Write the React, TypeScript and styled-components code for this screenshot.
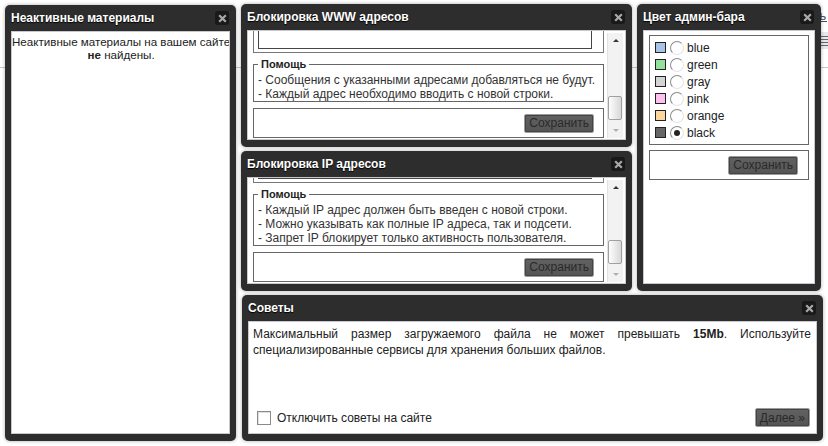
import React, { useState } from 'react';
import styled, { createGlobalStyle } from 'styled-components';

const GlobalStyle = createGlobalStyle`
  html, body {
    margin: 0;
    padding: 0;
    background: #fff;
  }
  body {
    font-family: "Liberation Sans", Arial, sans-serif;
    font-size: 12px;
    color: #222;
  }
`;

const Page = styled.div`
  position: relative;
  width: 828px;
  height: 446px;
  overflow: hidden;
  background: #fff;
`;

// the site page that lies under the admin panels
const SiteHeader = styled.div`
  height: 68px;
  border-bottom: 1px solid #c6c6c6;
  display: flex;
  flex-direction: column;
  align-items: flex-end;
  box-sizing: border-box;
`;

const LinkRow = styled.div`
  height: 32px;
  padding-top: 8px;
  box-sizing: border-box;
  margin-right: 1px;
`;

const AddNewsLink = styled.a`
  font-size: 13px;
  letter-spacing: 0.6px;
  color: #4e4e4e;
  text-decoration: underline;
  white-space: nowrap;
`;

const SideTool = styled.div`
  width: 10px;
  height: 17px;
  background: #e6eaee;
  border-left: 1px solid #c8ccd0;
  display: flex;
  flex-direction: column;
  justify-content: center;
  gap: 2px;
  padding-left: 2px;

  span {
    display: block;
    height: 1px;
    background: #666;
  }
`;

const Desk = styled.div`
  position: absolute;
  inset: 0;
  display: grid;
  grid-template-columns: 231px 391px 184px;
  grid-template-rows: 143px 140px 146px;
  gap: 4px 5px;
  padding: 4px 0 0 5px;
`;

const Panel = styled.section<{ $area: string; $offset?: string }>`
  grid-area: ${({ $area }) => $area};
  margin: ${({ $offset }) => $offset || '0'};
  display: flex;
  flex-direction: column;
  min-height: 0;
  background: #2d2d2d;
  border-radius: 5px;
  padding: 0 6px 7px;
  box-shadow: 0 0 3px 1px rgba(0, 0, 0, 0.2);
`;

const TitleBar = styled.header`
  height: 26px;
  flex-shrink: 0;
  display: flex;
  align-items: center;
  justify-content: space-between;
`;

const Title = styled.h2`
  margin: 0;
  font-size: 12px;
  font-weight: bold;
  color: #fff;
  text-shadow: 0 1px 1px #000;
  white-space: nowrap;
`;

const CloseButton = styled.button`
  width: 14px;
  height: 14px;
  margin-right: 1px;
  padding: 0;
  border: 0;
  border-radius: 3px;
  background: #191919;
  display: flex;
  align-items: center;
  justify-content: center;
`;

const Body = styled.div<{ $column?: boolean }>`
  flex: 1;
  min-height: 0;
  display: flex;
  flex-direction: ${({ $column }) => ($column ? 'column' : 'row')};
  background: #fff;
  border: 1px solid #c8c8d0;
  overflow: hidden;
`;

const Message = styled.p`
  flex: 1;
  margin: 0;
  padding: 3px 0;
  text-align: center;
  font-size: 11.6px;
  line-height: 13px;
  white-space: nowrap;
  color: #222;
`;

const ScrollPane = styled.div`
  flex: 1;
  min-width: 0;
  display: flex;
  flex-direction: column;
  justify-content: flex-end;
  overflow: hidden;
  padding: 0 3px 1px 5px;

  & > * {
    flex-shrink: 0;
  }
`;

const ListBox = styled.div`
  border: 1px solid #777;
  padding: 3px 11px 3px 4px;
`;

const ListArea = styled.div`
  height: 80px;
  border: 1px solid #444;
`;

const Help = styled.fieldset`
  margin: 5px 0 0;
  padding: 3px 6px 0 4px;
  border: 1px solid #666;
  min-width: 0;
`;

const HelpLegend = styled.legend`
  padding: 0 3px;
  font-size: 11px;
  line-height: 12px;
  font-weight: bold;
  color: #222;
`;

const HelpLine = styled.div`
  line-height: 14px;
  color: #333;
  white-space: nowrap;
`;

const ActionBox = styled.div<{ $pad?: number }>`
  margin-top: ${({ $pad }) => ($pad ? 5 : 6)}px;
  height: 28px;
  border: 1px solid #666;
  display: flex;
  align-items: center;
  justify-content: flex-end;
  padding-right: ${({ $pad }) => $pad || 9}px;
`;

const GrayButton = styled.button`
  height: 19px;
  padding: 0 4px;
  font-family: "Liberation Sans", Arial, sans-serif;
  font-size: 12px;
  color: #2a2a2a;
  background: linear-gradient(#626262, #545454);
  border: 1px solid #9c9c9c;
  border-radius: 2px;
  box-shadow: inset 0 0 0 1px #444;
`;

const Scrollbar = styled.div`
  width: 15px;
  margin: 2px 2px 1px 0;
  flex-shrink: 0;
  display: flex;
  flex-direction: column;
  background: #f2f2f2;
  border-left: 1px solid #e2e2e2;
`;

const ScrollArrow = styled.div<{ $down?: boolean }>`
  height: 15px;
  display: flex;
  align-items: center;
  justify-content: center;

  &::after {
    content: '';
    width: 0;
    height: 0;
    border-left: 3px solid transparent;
    border-right: 3px solid transparent;
    ${({ $down }) =>
      $down ? 'border-top: 3px solid #b0b0b0;' : 'border-bottom: 3px solid #333;'}
  }
`;

const ScrollTrack = styled.div`
  flex: 1;
  display: flex;
  flex-direction: column;
  justify-content: flex-end;
  padding: 0 1px 3px 0;
`;

const ScrollThumb = styled.div`
  height: 22px;
  border: 1px solid #a0a0a0;
  border-radius: 2px;
  background: linear-gradient(90deg, #fdfdfd, #d8d8d8);
`;

const ColorBody = styled.div`
  flex: 1;
  display: flex;
  flex-direction: column;
  padding: 4px 5px;
`;

const RadioBox = styled.div`
  border: 1px solid #666;
  padding: 3px 5px;
`;

const ColorRow = styled.label`
  height: 17px;
  display: flex;
  align-items: center;
  cursor: pointer;
`;

const Swatch = styled.span<{ $color: string }>`
  width: 9px;
  height: 9px;
  border: 1px solid #222;
  background: ${({ $color }) => $color};
  margin-right: 4px;
`;

const Radio = styled.span<{ $checked: boolean }>`
  width: 12px;
  height: 12px;
  border-radius: 50%;
  border: 1px solid #e4e4e4;
  border-top-color: #8c8c8c;
  border-left-color: #8c8c8c;
  background: #fff;
  display: flex;
  align-items: center;
  justify-content: center;

  &::after {
    content: '';
    width: 6px;
    height: 6px;
    border-radius: 50%;
    background: ${({ $checked }) => ($checked ? '#222' : 'transparent')};
  }
`;

const ColorName = styled.span`
  margin-left: 3px;
  color: #222;
`;

const TipText = styled.p`
  margin: 0;
  padding: 4px 5px 0 4px;
  line-height: 16px;
  text-align: justify;
  color: #222;

  b {
    font-weight: bold;
  }
`;

const TipFooter = styled.div`
  margin-top: auto;
  display: flex;
  align-items: center;
  justify-content: space-between;
  padding: 0 6px 6px 8px;
`;

const CheckLabel = styled.label`
  display: flex;
  align-items: center;
  color: #222;
  cursor: pointer;
`;

const CheckBox = styled.span`
  width: 12px;
  height: 12px;
  border: 1px solid #8a8a8a;
  box-shadow: inset 1px 1px 0 #e0e0e0;
  background: #fff;
  margin-right: 6px;
`;

const Close = () => (
  <CloseButton aria-label="close">
    <svg width="9" height="9" viewBox="0 0 9 9">
      <path d="M1.2 1.2L7.8 7.8M7.8 1.2L1.2 7.8" stroke="#a8a8a8" strokeWidth="2.2" />
    </svg>
  </CloseButton>
);

const ScrollBarView = () => (
  <Scrollbar>
    <ScrollArrow />
    <ScrollTrack>
      <ScrollThumb />
    </ScrollTrack>
    <ScrollArrow $down />
  </Scrollbar>
);

const colors = [
  { name: 'blue', swatch: '#a7c3e8' },
  { name: 'green', swatch: '#94e09e' },
  { name: 'gray', swatch: '#d4d4d4' },
  { name: 'pink', swatch: '#fdc0ef' },
  { name: 'orange', swatch: '#fdd59f' },
  { name: 'black', swatch: '#666666' },
];

const App: React.FC = () => {
  const [barColor, setBarColor] = useState('black');

  return (
    <Page>
      <GlobalStyle />
      <SiteHeader>
        <LinkRow>
          <AddNewsLink>Добавить новость</AddNewsLink>
        </LinkRow>
        <SideTool>
          <span />
          <span />
          <span />
          <span />
        </SideTool>
      </SiteHeader>

      <Desk>
        <Panel $area="1 / 1 / 4 / 2" $offset="1px 0 0 0">
          <TitleBar>
            <Title>Неактивные материалы</Title>
            <Close />
          </TitleBar>
          <Body>
            <Message>
              Неактивные материалы на вашем сайте
              <br />
              <b>не</b> найдены.
            </Message>
          </Body>
        </Panel>

        <Panel $area="1 / 2 / 2 / 3">
          <TitleBar>
            <Title>Блокировка WWW адресов</Title>
            <Close />
          </TitleBar>
          <Body>
            <ScrollPane>
              <ListBox>
                <ListArea />
              </ListBox>
              <Help>
                <HelpLegend>Помощь</HelpLegend>
                <HelpLine>- Сообщения с указанными адресами добавляться не будут.</HelpLine>
                <HelpLine>- Каждый адрес необходимо вводить с новой строки.</HelpLine>
              </Help>
              <ActionBox>
                <GrayButton>Сохранить</GrayButton>
              </ActionBox>
            </ScrollPane>
            <ScrollBarView />
          </Body>
        </Panel>

        <Panel $area="2 / 2 / 3 / 3">
          <TitleBar>
            <Title>Блокировка IP адресов</Title>
            <Close />
          </TitleBar>
          <Body>
            <ScrollPane>
              <ListBox>
                <ListArea />
              </ListBox>
              <Help>
                <HelpLegend>Помощь</HelpLegend>
                <HelpLine>- Каждый IP адрес должен быть введен с новой строки.</HelpLine>
                <HelpLine>- Можно указывать как полные IP адреса, так и подсети.</HelpLine>
                <HelpLine>- Запрет IP блокирует только активность пользователя.</HelpLine>
              </Help>
              <ActionBox>
                <GrayButton>Сохранить</GrayButton>
              </ActionBox>
            </ScrollPane>
            <ScrollBarView />
          </Body>
        </Panel>

        <Panel $area="1 / 3 / 3 / 4">
          <TitleBar>
            <Title>Цвет админ-бара</Title>
            <Close />
          </TitleBar>
          <Body>
            <ColorBody>
              <RadioBox>
                {colors.map((c) => (
                  <ColorRow key={c.name} onClick={() => setBarColor(c.name)}>
                    <Swatch $color={c.swatch} />
                    <Radio $checked={barColor === c.name} />
                    <ColorName>{c.name}</ColorName>
                  </ColorRow>
                ))}
              </RadioBox>
              <ActionBox $pad={10}>
                <GrayButton>Сохранить</GrayButton>
              </ActionBox>
            </ColorBody>
          </Body>
        </Panel>

        <Panel $area="3 / 2 / 4 / 4" $offset="0 -2px 0 1px">
          <TitleBar>
            <Title>Советы</Title>
            <Close />
          </TitleBar>
          <Body $column>
            <TipText>
              Максимальный размер загружаемого файла не может превышать <b>15Mb</b>.
              Используйте специализированные сервисы для хранения больших файлов.
            </TipText>
            <TipFooter>
              <CheckLabel>
                <CheckBox />
                Отключить советы на сайте
              </CheckLabel>
              <GrayButton>Далее »</GrayButton>
            </TipFooter>
          </Body>
        </Panel>
      </Desk>
    </Page>
  );
};

export default App;
